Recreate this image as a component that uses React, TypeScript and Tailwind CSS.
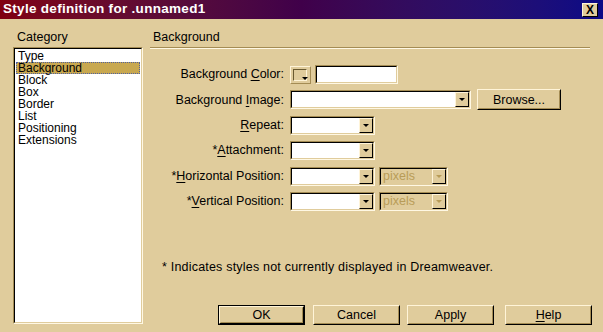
import React from "react";

const BG = "#e0cc9c";

const Sunken = ({ w, children, className = "" }: { w: number; children?: React.ReactNode; className?: string }) => (
  <div
    className={`h-[19px] border border-t-[#a48c54] border-l-[#a48c54] border-b-[#fff8e4] border-r-[#fff8e4] ${className}`}
    style={{ width: w }}
  >
    <div className="h-full border border-t-black border-l-black border-b-[#e0cc9c] border-r-[#e0cc9c] bg-white flex justify-end">
      {children}
    </div>
  </div>
);

const Arrow = ({ disabled = false }: { disabled?: boolean }) => (
  <div className="w-[14px] h-full bg-[#e0cc9c] border border-t-[#fff4d8] border-l-[#fff4d8] border-b-black border-r-black flex items-center justify-center">
    <div
      className={`w-0 h-0 border-l-[3px] border-r-[3px] border-t-[3px] border-l-transparent border-r-transparent ${
        disabled ? "border-t-[#b89c58]" : "border-t-black"
      }`}
    />
  </div>
);

const Select = ({ w }: { w: number }) => (
  <Sunken w={w}>
    <Arrow />
  </Sunken>
);

const PixelsSelect = () => (
  <div className="h-[19px] w-[69px] border border-t-[#a48c54] border-l-[#a48c54] border-b-[#fff8e4] border-r-[#fff8e4]">
    <div className="h-full border border-t-black border-l-black border-b-[#e0cc9c] border-r-[#e0cc9c] bg-[#e0cc9c] flex">
      <span className="flex-1 pl-[2px] leading-[15px] text-[#b89c58]">pixels</span>
      <Arrow disabled />
    </div>
  </div>
);

const Btn = ({ children, def = false, className = "" }: { children: React.ReactNode; def?: boolean; className?: string }) => (
  <div className={`w-[87px] h-[20px] ${def ? "border border-black" : ""} ${className}`}>
    <div className="h-full border border-t-[#fff4d8] border-l-[#fff4d8] border-b-black border-r-black">
      <div className="h-full border border-t-[#e0cc9c] border-l-[#e0cc9c] border-b-[#a48c54] border-r-[#a48c54] flex items-center justify-center leading-none">
        {children}
      </div>
    </div>
  </div>
);

const Row = ({ label, children }: { label: React.ReactNode; children: React.ReactNode }) => (
  <div className="flex items-center h-[19px]">
    <div className="w-[135px] text-right pr-[1px] whitespace-nowrap">{label}</div>
    <div className="ml-[5px] flex items-center">{children}</div>
  </div>
);

const U = ({ children }: { children: React.ReactNode }) => <span className="underline underline-offset-2">{children}</span>;

const categories = ["Type", "Background", "Block", "Box", "Border", "List", "Positioning", "Extensions"];

export default function App() {
  return (
    <div
      className="w-[603px] h-[332px] overflow-hidden flex flex-col text-[12.5px] text-black"
      style={{ background: BG, fontFamily: '"Liberation Sans", Arial, sans-serif' }}
    >
      {/* Title bar */}
      <div className="h-[19px] flex items-center justify-between bg-gradient-to-r from-[#800010] via-[#40004a] to-[#0a0a86] pl-[3px] pr-[5px]">
        <span className="text-white font-bold text-[13.5px] tracking-[0.3px]">Style definition for .unnamed1</span>
        <div className="w-[16px] h-[14px] bg-[#e0cc9c] border border-t-[#fff4d8] border-l-[#fff4d8] border-b-black border-r-black flex items-center justify-center text-[12px] font-bold leading-none">
          X
        </div>
      </div>

      <div className="flex flex-1">
        {/* Category column */}
        <div className="pl-[13px] w-[143px] pt-[11px]">
          <div className="h-[14px] leading-[14px] pl-[4px]">Category</div>
          <div className="mt-[3px] h-[277px] border border-t-[#a48c54] border-l-[#a48c54] border-b-[#fff8e4] border-r-[#fff8e4]">
            <div className="h-full border border-t-black border-l-black border-b-[#e0cc9c] border-r-[#e0cc9c] bg-white pt-[1px] px-[1px] text-[12px]">
              {categories.map((c) => (
                <div
                  key={c}
                  className={`h-[12px] leading-[12px] pl-[2px] ${
                    c === "Background" ? "bg-[#c8a850] outline outline-1 outline-dotted outline-[#5060a0] -outline-offset-1" : ""
                  }`}
                >
                  {c}
                </div>
              ))}
            </div>
          </div>
        </div>

        {/* Panel */}
        <div className="ml-[7px] w-[443px] pt-[11px] flex flex-col">
          <div className="h-[14px] leading-[14px] pl-[3px]">Background</div>
          <div className="mt-[3px] mr-[3px] h-[2px] border-t border-t-[#a48c54] border-b border-b-[#fff8e4]" />

          <div className="mt-[16px] flex flex-col gap-[6.4px]">
            <Row
              label={
                <>
                  Background <U>C</U>olor:
                </>
              }
            >
              <div className="w-[21px] h-[18px] border border-t-[#fff4d8] border-l-[#fff4d8] border-b-[#a48c54] border-r-[#a48c54] p-[2px] relative">
                <div className="w-[14px] h-[12px] border border-t-[#6a5a30] border-l-[#6a5a30] border-b-[#fff4d8] border-r-[#fff4d8]" />
                <div className="absolute right-[2px] bottom-[3px] w-0 h-0 border-l-[3px] border-r-[3px] border-t-[3px] border-l-transparent border-r-transparent border-t-black" />
              </div>
              <Sunken w={83} className="ml-[4px]" />
            </Row>
            <Row
              label={
                <>
                  Background <U>I</U>mage:
                </>
              }
            >
              <Select w={181} />
              <Btn className="ml-[6px] !h-[21px] !w-[84px]">Browse...</Btn>
            </Row>
            <Row
              label={
                <>
                  <U>R</U>epeat:
                </>
              }
            >
              <Select w={85} />
            </Row>
            <Row
              label={
                <>
                  *<U>A</U>ttachment:
                </>
              }
            >
              <Select w={85} />
            </Row>
            <Row
              label={
                <>
                  *<U>H</U>orizontal Position:
                </>
              }
            >
              <Select w={85} />
              <div className="ml-[4px]">
                <PixelsSelect />
              </div>
            </Row>
            <Row
              label={
                <>
                  *<U>V</U>ertical Position:
                </>
              }
            >
              <Select w={85} />
              <div className="ml-[4px]">
                <PixelsSelect />
              </div>
            </Row>
          </div>

          <div className="mt-[49px] pl-[12px] h-[14px] leading-[14px] tracking-[0.2px]">
            * Indicates styles not currently displayed in Dreamweaver.
          </div>

          <div className="mt-[31px] flex pl-[68px]">
            <Btn def>OK</Btn>
            <Btn className="ml-[8px]">Cancel</Btn>
            <Btn className="ml-[7px]">Apply</Btn>
            <Btn className="ml-[11px]">
              <U>H</U>elp
            </Btn>
          </div>
        </div>
      </div>
    </div>
  );
}
